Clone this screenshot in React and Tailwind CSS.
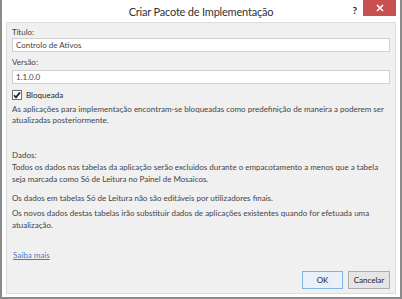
const App = () => {
  return (
    <div className="w-[402px] h-[299px] bg-white" style={{ fontFamily: 'Lato, "Open Sans", sans-serif' }}>
      <div className="h-full flex flex-col border-2 border-t-0 border-[#8a8a8a] bg-white px-[4px] pb-[3px]">
        {/* Title bar */}
        <div className="relative h-[22px] shrink-0 flex items-center justify-center">
          <span className="text-[11px] tracking-[-0.2px] text-[#333] mt-[2px]">Criar Pacote de Implementação</span>
          <span className="absolute right-[39px] top-[3px] text-[10px] font-bold text-[#222]">?</span>
          <div className="absolute right-0 top-0 w-[33px] h-[16px] bg-[#c75050] flex items-center justify-center">
            <svg width="8" height="8" viewBox="0 0 8 8">
              <path d="M1 1 L7 7 M7 1 L1 7" stroke="#fff" strokeWidth="1.6" />
            </svg>
          </div>
        </div>

        {/* Body */}
        <div className="flex-1 flex flex-col bg-[#f0f0f0] border border-[#dcdcdc] px-[5px] pt-[3px] pb-[4px] text-[8px] leading-[12px] text-[#444]">
          <div>Título:</div>
          <div className="h-[14px] border border-[#d0d0d0] bg-white px-[3px] flex items-center">Controlo de Ativos</div>
          <div className="mt-[4px]">Versão:</div>
          <div className="h-[14px] mt-[2px] border border-[#d0d0d0] bg-white px-[3px] flex items-center">1.1.0.0</div>

          <div className="mt-[5px] h-[12px] flex items-center gap-[4px]">
            <div className="w-[10px] h-[10px] border border-[#707070] bg-white flex items-center justify-center">
              <svg width="8" height="8" viewBox="0 0 8 8">
                <path d="M1 4.2 L3 6.4 L7 1.4" stroke="#222" strokeWidth="1.7" fill="none" />
              </svg>
            </div>
            <span className="text-[#222]">Bloqueada</span>
          </div>

          <p className="mt-[3px] leading-[11px]">
            As aplicações para implementação encontram-se bloqueadas como predefinição de maneira a poderem ser atualizadas posteriormente.
          </p>

          <p className="mt-[23px]">Dados:</p>
          <p>
            Todos os dados nas tabelas da aplicação serão excluidos durante o empacotamento a menos que a tabela seja marcada como Só de Leitura no Painel de Mosaicos.
          </p>
          <p className="mt-[7px]">Os dados em tabelas Só de Leitura não são editáveis por utilizadores finais.</p>
          <p className="mt-[3px]">
            Os novos dados destas tabelas irão substituir dados de aplicações existentes quando for efetuada uma atualização.
          </p>

          <a className="mt-[18px] ml-[1px] text-[#4a78c0] underline">Saiba mais </a>

          <div className="mt-auto flex justify-end gap-[5px]">
            <button className="w-[41px] h-[18px] border border-[#7eb4ea] bg-[#eaf0f7] text-[8px] text-[#222]">OK</button>
            <button className="w-[42px] h-[18px] border border-[#adadad] bg-[#e5e5e5] text-[8px] text-[#222]">Cancelar</button>
          </div>
        </div>
      </div>
    </div>
  );
};

export default App;
